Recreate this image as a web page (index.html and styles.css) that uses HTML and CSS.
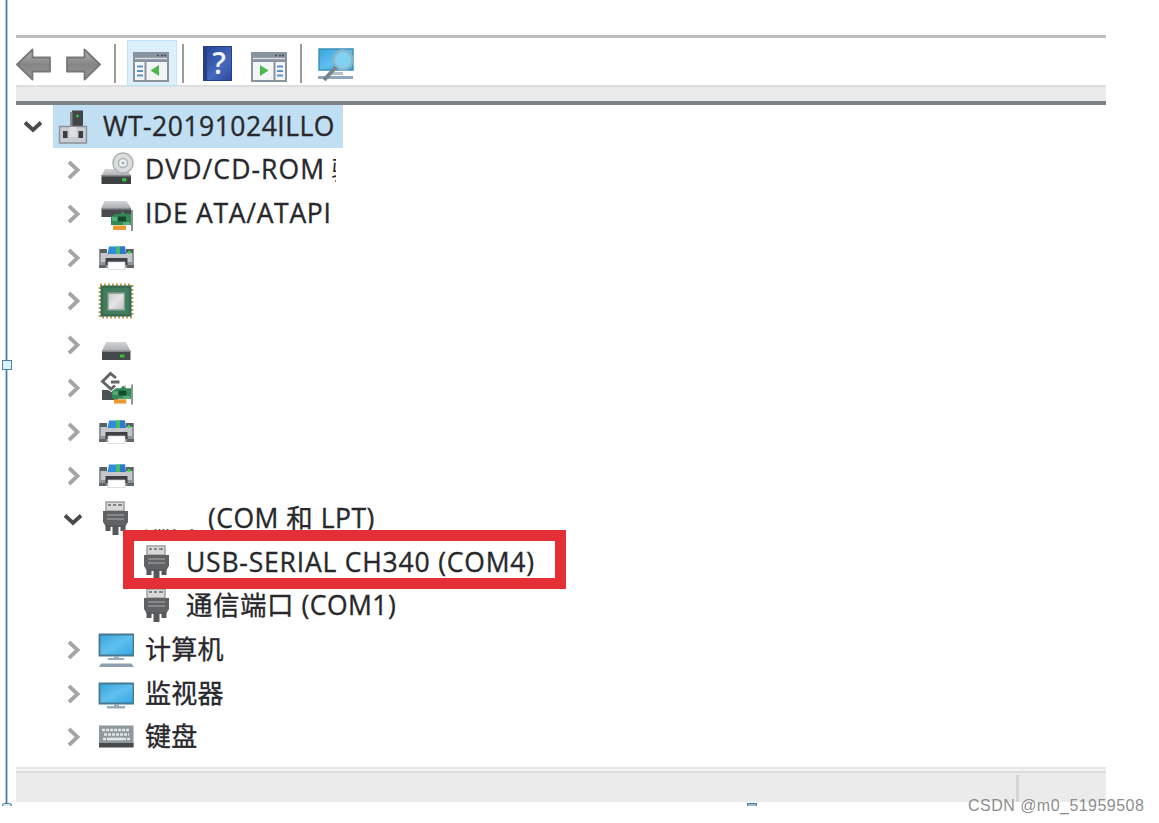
FILE: index.html
```html
<!DOCTYPE html>
<html lang="zh-CN">
<head>
<meta charset="utf-8">
<title>Device Manager</title>
<link rel="stylesheet" href="styles.css">
</head>
<body>
<svg class="defs" aria-hidden="true">
  <defs>
    <linearGradient id="grey" x1="0" y1="0" x2="0" y2="1"><stop offset="0" stop-color="#b4b4b4"/><stop offset=".5" stop-color="#858585"/><stop offset="1" stop-color="#9a9a9a"/></linearGradient>
    <linearGradient id="blue" x1="0" y1="0" x2="1" y2="1"><stop offset="0" stop-color="#38a3dc"/><stop offset=".5" stop-color="#5fc0ee"/><stop offset="1" stop-color="#35a5e2"/></linearGradient>
    <linearGradient id="lid" x1="0" y1="0" x2="0" y2="1"><stop offset="0" stop-color="#d4d5d7"/><stop offset="1" stop-color="#abadb0"/></linearGradient>
    <linearGradient id="die" x1="0" y1="0" x2="1" y2="1"><stop offset="0" stop-color="#c4c6c6"/><stop offset=".5" stop-color="#e4e4e4"/><stop offset="1" stop-color="#bcbebe"/></linearGradient>
  </defs>
  <symbol id="open" viewBox="0 0 20 13"><path d="M2 2.5 10 10 18 2.5" fill="none" stroke="#4b4b4d" stroke-width="3.8"/></symbol>
  <symbol id="closed" viewBox="0 0 14 20"><path d="M2 2 10.5 10 2 18" fill="none" stroke="#a5a5a6" stroke-width="3.8"/></symbol>
  <symbol id="pc-root" viewBox="0 0 36 36">
    <path d="M16 1.5h11V17H16z" fill="#434546"/><path d="M14 3h2.500v14H14z" fill="#85898c"/><circle cx="21.5" cy="7" r="1.4" fill="#38c242"/>
    <path d="M3.500 17.500h27V34h-27z" fill="#c9cdd1" stroke="#8b9298" stroke-width="1.400"/>
    <path d="M7 22h4.500v7H7zM22.500 22H27v7h-4.500z" fill="#3a3c3e"/><path d="M13.500 18h7v10h-7z" fill="#dde0e2"/>
  </symbol>
  <symbol id="dvd" viewBox="0 0 36 36">
    <path d="M7 17h22l4 7H3.500z" fill="url(#lid)"/>
    <circle cx="25" cy="11" r="10" fill="#dcdddd" stroke="#b0b3b4" stroke-width="1.500"/><circle cx="25" cy="11" r="4.500" fill="#edf1f2" stroke="#abb4ba" stroke-width="1.500"/><circle cx="25" cy="11" r="1.500" fill="#a6adb1"/>
    <path d="M3.500 23H33v9H3.500z" fill="#3d4142"/><path d="M3.500 23H33v1.500H3.500z" fill="#85898a"/><rect x="24" y="26" width="4.500" height="3.500" rx="1" fill="#39bb42"/>
  </symbol>
  <symbol id="board" viewBox="0 0 22 21">
    <path d="M20 0h2v21h-2z" fill="#8c9193"/><path d="m0 7 4-3h5l3-3 2 3h6v11H0z" fill="#328955"/><path d="M1 7h5v4H1zM12 12h7v3h-7z" fill="#54ae77"/><path d="M7 6.500h8v5H7z" fill="#17492e"/><path d="M2 15.500h13v4.500H2z" fill="#e79c31"/>
  </symbol>
  <symbol id="ide" viewBox="0 0 36 36">
    <path d="M6.500 5h22L33 12H3.500z" fill="url(#lid)"/><path d="M3.500 12H33v9H3.500z" fill="#474b4d"/><path d="M3.500 12H33v1.500H3.500z" fill="#8b8e90"/>
    <use href="#board" x="13" y="14" width="22" height="21"/>
  </symbol>
  <symbol id="printer" viewBox="0 0 36 36">
    <path d="M1 9h8v5h19V9h8v19H1z" fill="#8f9499"/><path d="M2 9h7v4H2zM28 9h7v4h-7z" fill="#596067"/><path d="M3 13h31v9H3z" fill="#c3c6ca"/><path d="M1 25h7v3H1zM29 25h7v3h-7z" fill="#60666c"/>
    <path d="M11 6.500h16l1 7.500H9.500z" fill="#308bdc"/><path d="M18 6.500h4V14h-4z" fill="#42bd60"/><path d="M22 6.500h5l.5 7.500H22z" fill="#2e78cb"/>
    <path d="M7.500 18h22v7h-22z" fill="#3e4246"/><path d="M10 22h17v7.500H10z" fill="#fff" stroke="#cfd1d2" stroke-width=".7"/><circle cx="31" cy="12.500" r="1.600" fill="#45dc3e"/>
  </symbol>
  <symbol id="chip" viewBox="0 0 36 36">
    <path d="M2 2h32v32H2z" fill="none" stroke="#c5964b" stroke-width="3" stroke-dasharray="1.800 2.200"/><path d="M2.500 2.500h31v31h-31z" fill="#376c50"/><path d="M5 5h26v26H5z" fill="#407d5e"/><path d="M10 10h16.500v17H10z" fill="url(#die)" stroke="#7f9c8d" stroke-width="1.300"/>
  </symbol>
  <symbol id="disk" viewBox="0 0 36 36">
    <path d="M8 15h20l4.500 9H4z" fill="url(#lid)"/><path d="M4 24h28.500v9H4z" fill="#45494b"/><path d="M4 23.500h28.500v1.500H4z" fill="#84888b"/><path d="M22 27.500h4.500v3H22z" fill="#41bb42"/>
  </symbol>
  <symbol id="storage" viewBox="0 0 36 36">
    <path d="m18 8-5.500-4.500L4.500 11.500 13 19l4-3.500M13 12h8.500" fill="none" stroke="#606467" stroke-width="2.900"/><path d="M4 20h6l5 3h5v7H4z" fill="#4b5053"/><path d="m20 20 8-5v8h-9z" fill="#b8bcbe"/><use href="#board" x="14" y="14" width="21" height="21"/>
  </symbol>
  <symbol id="plug" viewBox="0 0 36 36">
    <path d="M8 1h18v9H8z" fill="#d9d9d9" stroke="#a0a0a0" stroke-width="1.500"/><path d="M10 3h3v2h-3zm5 0h3v2h-3zm5 0h4v2h-4z" fill="#858585"/>
    <path d="M5 10h25v11l-3 5H8l-3-5z" fill="#606264"/><path d="M9 13h17v2H9zm0 4h17v2H9z" fill="#88898a"/><path d="M7.500 24h5v6h-5zm7 0h6v10h-6zm8 0h5v6h-5z" fill="#56585a"/>
  </symbol>
  <symbol id="computer" viewBox="0 0 36 36">
    <path d="M1.500 2.500h34v21h-34z" fill="url(#blue)" stroke="#457991" stroke-width="1.800"/><path d="M16 24h5v2h5v2H10v-2h6z" fill="#9badbc"/><path d="M3 31.500h30.500l2.500 3.500H1z" fill="#8f9fae"/>
  </symbol>
  <symbol id="monitor" viewBox="0 0 36 36">
    <path d="M1.500 7.500h34v20h-34z" fill="url(#blue)" stroke="#457991" stroke-width="1.800"/><path d="M16 28h5v2h6v2.500H9V30h7z" fill="#97acbd"/>
  </symbol>
  <symbol id="keyboard" viewBox="0 0 36 36">
    <path d="M1 6.500h34.500V28H1z" fill="#8e989f"/><path d="M4 11h28M6 15.500h25M5 20h27" stroke="#e3e5e6" stroke-width="2.500" stroke-dasharray="3 1"/><path d="M10 20h15" stroke="#e3e5e6" stroke-width="2.500"/><path d="M1 24h34.500v4.500H1z" fill="#464a4d"/>
  </symbol>
  <symbol id="arrow" viewBox="0 0 36 34"><path d="M1 16.500 16.500 1.500v8H34v14H16.500v8z" fill="url(#grey)" stroke="#777" stroke-width="1.800" stroke-linejoin="round"/></symbol>
  <symbol id="pane" viewBox="0 0 36 30">
    <path d="M1 1h34v28H1z" fill="#f4f6f5" stroke="#8a929c" stroke-width="2"/><path d="M1 1h34v9H1z" fill="#8992a0"/><path d="M2 6.500h32" stroke="#d6dadd" stroke-width="1.500"/><path d="M24 3.500h2m2 0h2m1 0h2" stroke="#475062" stroke-width="1.700"/>
    <path d="M12.500 10v19" stroke="#8a929c" stroke-width="2"/><path d="M4 14.500h6m-6 4.500h6m-6 4.500h6" stroke="#5a91c8" stroke-width="1.900"/>
  </symbol>
</svg>

<main class="window">
  <header class="toolbar">
    <svg class="arrow"><use href="#arrow"/></svg>
    <svg class="arrow forward"><use href="#arrow"/></svg>
    <i class="separator"></i>
    <span class="tool-active"><svg class="pane" viewBox="0 0 36 30"><use href="#pane"/><path d="M26 13v11l-8.500-5.500z" fill="#4bb74c"/></svg></span>
    <i class="separator"></i>
    <span class="help">?</span>
    <svg class="pane right" viewBox="0 0 36 30"><g transform="matrix(-1 0 0 1 36 0)"><path d="M1 1h34v28H1z" fill="#f4f6f5" stroke="#8a929c" stroke-width="2"/><path d="M12.500 10v19" stroke="#8a929c" stroke-width="2"/><path d="M4 14.500h6m-6 4.500h6m-6 4.500h6" stroke="#5a91c8" stroke-width="1.900"/></g><path d="M1 1h34v9H1z" fill="#8992a0"/><path d="M2 6.500h32" stroke="#d6dadd" stroke-width="1.500"/><path d="M24 3.500h2m2 0h2m1 0h2" stroke="#475062" stroke-width="1.700"/><path d="M9 13v11l8.500-5.500z" fill="#4bb74c"/></svg>
    <i class="separator"></i>
    <svg class="scan" viewBox="0 0 38 36"><path d="M2 2h34v21H2z" fill="url(#blue)" stroke="#388dbb" stroke-width="1.400"/><path d="M1 29h35v3H1z" fill="#8da6b9"/><path d="M12 25h14v3H12z" fill="#b4c1cb"/><circle cx="26" cy="13" r="9.500" fill="#80d0f1" stroke="#88b6cb" stroke-width="2.500"/><path d="m19 20-12 13" stroke="#76858f" stroke-width="4"/></svg>
  </header>
  <div class="band"></div>
  <section class="tree">
    <div class="row root"><svg class="chevron-open"><use href="#open"/></svg><div class="selected"><svg class="icon"><use href="#pc-root"/></svg><span class="label host">WT-20191024ILLO</span></div></div>
    <div class="row"><svg class="chevron"><use href="#closed"/></svg><svg class="icon"><use href="#dvd"/></svg><span class="label dvd">DVD/CD-ROM</span><span class="clipped">驱</span></div>
    <div class="row"><svg class="chevron"><use href="#closed"/></svg><svg class="icon"><use href="#ide"/></svg><span class="label ide">IDE ATA/ATAPI</span></div>
    <div class="row"><svg class="chevron"><use href="#closed"/></svg><svg class="icon"><use href="#printer"/></svg></div>
    <div class="row"><svg class="chevron"><use href="#closed"/></svg><svg class="icon"><use href="#chip"/></svg></div>
    <div class="row"><svg class="chevron"><use href="#closed"/></svg><svg class="icon"><use href="#disk"/></svg></div>
    <div class="row"><svg class="chevron"><use href="#closed"/></svg><svg class="icon"><use href="#storage"/></svg></div>
    <div class="row"><svg class="chevron"><use href="#closed"/></svg><svg class="icon"><use href="#printer"/></svg></div>
    <div class="row"><svg class="chevron"><use href="#closed"/></svg><svg class="icon"><use href="#printer"/></svg></div>
    <div class="row expanded"><svg class="chevron-open"><use href="#open"/></svg><svg class="icon"><use href="#plug"/></svg><span class="masked">端口</span><span class="label ports">(COM 和 LPT)</span></div>
    <div class="row child"><svg class="icon"><use href="#plug"/></svg><span class="label usb">USB-SERIAL CH340 (COM4)</span></div>
    <div class="row child"><svg class="icon"><use href="#plug"/></svg><span class="label com">通信端口 (COM1)</span></div>
    <div class="row"><svg class="chevron"><use href="#closed"/></svg><svg class="icon"><use href="#computer"/></svg><span class="label cjk">计算机</span></div>
    <div class="row"><svg class="chevron"><use href="#closed"/></svg><svg class="icon"><use href="#monitor"/></svg><span class="label cjk">监视器</span></div>
    <div class="row"><svg class="chevron"><use href="#closed"/></svg><svg class="icon"><use href="#keyboard"/></svg><span class="label cjk">键盘</span></div>
    <div class="highlight"></div>
  </section>
  <footer class="status"><i class="status-divider"></i></footer>
</main>
<div class="frame-line"></div>
<div class="handle middle"></div>
<div class="handle corner"></div>
<div class="handle bottom"></div>
<div class="watermark">CSDN @m0_51959508</div>
</body>
</html>
```

FILE: styles.css
```css
* { box-sizing: border-box; }
body { position: relative; margin: 0; width: 1159px; height: 823px; overflow: hidden; background: #fff; color: #28282c; font-family: "Open Sans", "Noto Sans CJK SC", sans-serif; }
.defs { position: absolute; width: 0; height: 0; }
.window { width: 1090px; margin-left: 16px; padding-top: 35px; }
.toolbar { display: flex; align-items: flex-start; height: 50px; border-top: 3px solid #bdbdbd; }
.toolbar svg { flex: none; }
.arrow { width: 36px; height: 34px; margin-top: 10px; }
.forward { margin-left: 13px; transform: scaleX(-1); }
.separator { flex: none; width: 2px; height: 39px; margin: 6px 0 0 13px; background: #9b9b9b; }
.tool-active { display: flex; flex: none; width: 50px; height: 46px; margin: 2px 0 0 11px; padding: 11px 5px 0; background: #dceffa; border: 1px solid #bfe4f7; }
.pane { width: 36px; height: 30px; }
.tool-active + .separator { margin-left: 5px; }
.help { flex: none; width: 29px; height: 35px; margin: 8px 0 0 19px; border: 1px solid #233e8b; border-left: 4px solid #253f8b; background: linear-gradient(135deg, #2a4796, #4469bd 60%, #2c4aa0); color: #f0f4ff; font-size: 30px; font-weight: 600; line-height: 32px; text-align: center; }
.pane.right { margin: 14px 0 0 19px; }
.pane.right + .separator { margin-left: 13px; }
.scan { width: 38px; height: 36px; margin: 9px 0 0 15px; }
.band { height: 20px; background: #ebebeb; border-top: 2px solid #dedede; border-bottom: 4px solid #808385; }
.tree { position: relative; height: 662px; }
.row { display: flex; align-items: center; height: 43.6px; padding-left: 51px; white-space: nowrap; }
.row > *, .selected > * { flex: none; }
.chevron { width: 14px; height: 20px; margin-right: 17px; }
.chevron-open { width: 20px; height: 13px; }
.icon { width: 36px; height: 36px; }
.label { margin-left: 11px; padding-bottom: 2px; font-size: 26.5px; line-height: 36px; -webkit-text-stroke: .35px #28282c; }
.root { padding-left: 7px; }
.selected { display: flex; align-items: center; height: 43px; width: 290px; margin-left: 10px; padding-left: 3px; background: #c0dff3; }
.expanded { padding-left: 47px; }
.expanded .chevron-open { margin-right: 15px; }
.child { padding-left: 123px; }
.clipped { width: 5px; margin-left: 6px; padding-bottom: 2px; overflow: hidden; font-family: "Noto Sans CJK SC", sans-serif; font-size: 26px; line-height: 28px; }
.masked { width: 64px; margin-left: 10px; font-family: "Noto Sans CJK SC", sans-serif; font-size: 26px; line-height: 32px; clip-path: inset(26px 0 0 0); }
.host { letter-spacing: .5px; }
.dvd { letter-spacing: 1.1px; }
.ide { letter-spacing: .7px; }
.ports { margin-left: 0; letter-spacing: .5px; }
.usb { letter-spacing: .8px; }
.com { letter-spacing: .5px; }
.cjk { font-family: "Noto Sans CJK SC", sans-serif; font-size: 26px; letter-spacing: .2px; padding-bottom: 4px; }
.highlight { position: absolute; left: 107px; top: 424.5px; width: 443px; height: 59px; border: 11px solid #e42f36; }
.status { display: flex; height: 35px; padding-left: 1000px; border-top: 2px solid #e6e6e6; background: linear-gradient(#f4f4f4 0 2px, #dcdcdc 2px 4px, #ebebeb 4px); }
.status-divider { width: 3px; height: 27px; margin-top: 6px; background: #d6d6d6; }
.frame-line { position: absolute; left: 5px; top: 0; width: 3px; height: 804px; border: solid #b9cde0; border-width: 0 1px; background: #4878a8; }
.handle { position: absolute; border: 1px solid #527ea5; background: #d9f2f6; }
.middle { left: 2px; top: 360px; width: 10px; height: 10px; }
.corner { left: 2px; top: 803px; width: 10px; height: 3px; border-bottom: 0; border-radius: 5px 5px 0 0; }
.bottom { left: 747px; top: 803px; width: 10px; height: 3px; border-bottom: 0; background: #9bb8cf; }
.watermark { position: absolute; left: 968px; top: 796px; color: #8d8d8d; font: 16px/20px "Liberation Sans", sans-serif; letter-spacing: .47px; white-space: nowrap; }
```
